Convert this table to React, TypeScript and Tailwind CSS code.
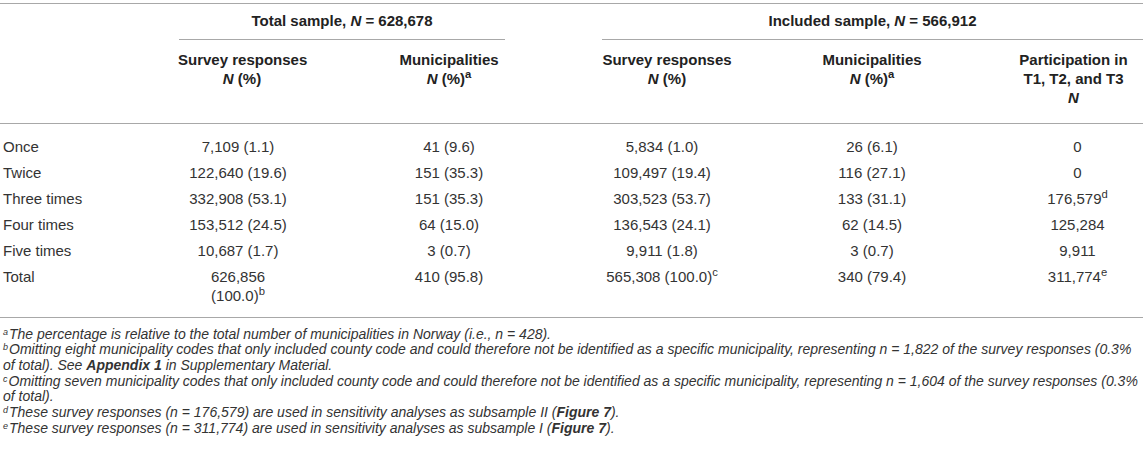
import React from "react";

type Row = { label: string; cells: React.ReactNode[] };

const ROWS: Row[] = [
  { label: "Once", cells: ["7,109 (1.1)", "41 (9.6)", "5,834 (1.0)", "26 (6.1)", "0"] },
  { label: "Twice", cells: ["122,640 (19.6)", "151 (35.3)", "109,497 (19.4)", "116 (27.1)", "0"] },
  {
    label: "Three times",
    cells: ["332,908 (53.1)", "151 (35.3)", "303,523 (53.7)", "133 (31.1)", <>176,579<sup>d</sup></>],
  },
  { label: "Four times", cells: ["153,512 (24.5)", "64 (15.0)", "136,543 (24.1)", "62 (14.5)", "125,284"] },
  { label: "Five times", cells: ["10,687 (1.7)", "3 (0.7)", "9,911 (1.8)", "3 (0.7)", "9,911"] },
];

const COLS = "grid grid-cols-[170px_136px_286px_140px_280px_131px]";

function N() {
  return <span className="italic">N</span>;
}

// footnote marker, kept small so it doesn't push into the line above
function Mark({ c }: { c: string }) {
  return <sup className="top-[-4px] pr-[1px] text-[9px]">{c}</sup>;
}

export default function App() {
  return (
    <div className="w-[1143px] bg-white pt-[3px] font-['Liberation_Sans',Arial,sans-serif] text-[15px] text-[#333]">
      <div className="border-t border-[#a8a8a8]">
        {/* group headers */}
        <div className="flex font-bold text-[#222]">
          <div className="w-[179px] shrink-0" />
          <div className="flex h-[36px] w-[326px] shrink-0 items-center justify-center border-b border-[#a8a8a8]">
            <span>
              Total sample, <N /> = 628,678
            </span>
          </div>
          <div className="w-[97px] shrink-0" />
          <div className="flex h-[36px] flex-1 items-center justify-center border-b border-[#a8a8a8]">
            <span>
              Included sample, <N /> = 566,912
            </span>
          </div>
        </div>

        {/* column headers */}
        <div className={`${COLS} h-[84px] border-b border-[#a8a8a8] pt-[10px] text-center leading-[19px] font-bold text-[#222]`}>
          <div />
          <div className="whitespace-nowrap pl-[8px]">
            Survey responses
            <br />
            <N /> (%)
          </div>
          <div className="whitespace-nowrap">
            Municipalities
            <br />
            <N /> (%)<sup>a</sup>
          </div>
          <div className="whitespace-nowrap pl-[10px]">
            Survey responses
            <br />
            <N /> (%)
          </div>
          <div className="whitespace-nowrap">
            Municipalities
            <br />
            <N /> (%)<sup>a</sup>
          </div>
          <div className="whitespace-nowrap pr-[8px]">
            Participation in
            <br />
            T1, T2, and T3
            <br />
            <N />
          </div>
        </div>

        {/* body */}
        <div className="border-b border-[#a8a8a8] pt-[9px] pb-[12px] leading-[19px]">
          {ROWS.map((r) => (
            <div key={r.label} className={`${COLS} h-[26px] items-center`}>
              <div className="pl-[3px]">{r.label}</div>
              {r.cells.map((c, i) => (
                <div key={i} className="text-center whitespace-nowrap">
                  {c}
                </div>
              ))}
            </div>
          ))}
          <div className={`${COLS} pt-[3.5px]`}>
            <div className="pl-[3px]">Total</div>
            <div className="text-center">
              626,856
              <br />
              (100.0)<sup>b</sup>
            </div>
            <div className="text-center">410 (95.8)</div>
            <div className="text-center">
              565,308 (100.0)<sup>c</sup>
            </div>
            <div className="text-center">340 (79.4)</div>
            <div className="text-center">
              311,774<sup>e</sup>
            </div>
          </div>
        </div>

        {/* footnotes */}
        <div className="pt-[9px] pl-[3px] text-[14px] italic leading-[15.7px] whitespace-nowrap">
          <p>
            <Mark c="a" />The percentage is relative to the total number of municipalities in Norway (i.e., n = 428).
          </p>
          <p>
            <Mark c="b" />Omitting eight municipality codes that only included county code and could therefore not be identified as a specific municipality, representing n = 1,822 of the survey responses (0.3%
            <br />
            of total). See <span className="font-bold">Appendix 1</span> in Supplementary Material.
          </p>
          <p>
            <Mark c="c" />Omitting seven municipality codes that only included county code and could therefore not be identified as a specific municipality, representing n = 1,604 of the survey responses (0.3%
            <br />
            of total).
          </p>
          <p>
            <Mark c="d" />These survey responses (n = 176,579) are used in sensitivity analyses as subsample II (<span className="font-bold">Figure 7</span>).
          </p>
          <p>
            <Mark c="e" />These survey responses (n = 311,774) are used in sensitivity analyses as subsample I (<span className="font-bold">Figure 7</span>).
          </p>
        </div>
      </div>
    </div>
  );
}
